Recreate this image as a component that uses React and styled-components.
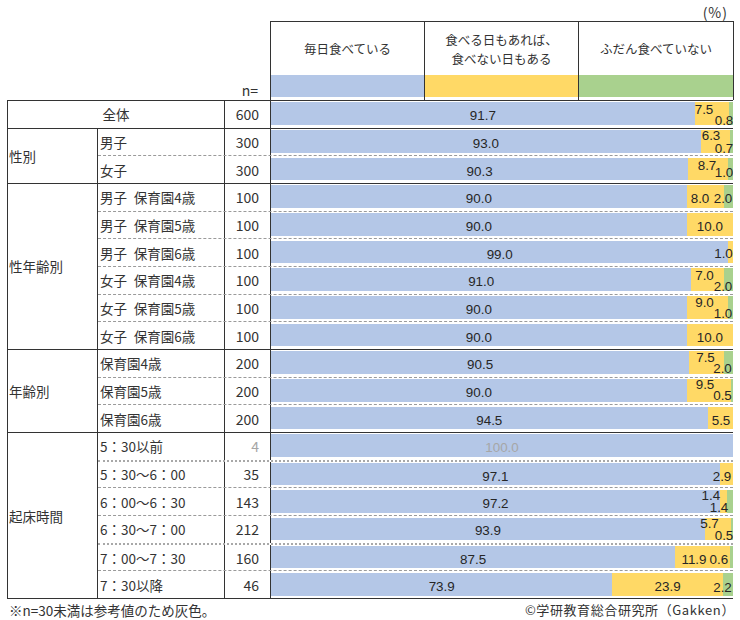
import React from 'react';
import styled, { createGlobalStyle } from 'styled-components';

const GlobalStyle = createGlobalStyle`
  html, body { margin: 0; padding: 0; background: #ffffff; }
  body {
    font-family: "Noto Sans CJK JP", "Noto Sans", sans-serif;
    color: #333333;
  }
`;

const COLORS = ['#B4C7E7', '#FFD966', '#A9D18E'];
const BAR_W = 462;
const ROW_H = 27.68;
const INK = '#333333';
const MUTED = '#a6a6a6';

const Page = styled.div`
  width: 740px;
  height: 620px;
  overflow: hidden;
  display: flex;
  flex-direction: column;
`;

const UnitRow = styled.div`
  height: 21px;
  box-sizing: border-box;
  display: flex;
  justify-content: flex-end;
  align-items: flex-start;
  padding: 3px 12px 0 0;
  font-size: 14px;
  line-height: 18px;
  letter-spacing: 1px;
`;

const HeaderRow = styled.div`
  display: flex;
  height: 79px;
`;

const HeadStub = styled.div`
  width: 270px;
  flex: none;
  box-sizing: border-box;
  display: flex;
  justify-content: flex-end;
  align-items: flex-end;
  padding-right: 12px;
  font-size: 14px;
  line-height: 20px;
`;

const ChartHead = styled.div`
  width: 464px;
  flex: none;
  box-sizing: border-box;
  border: 1px solid ${INK};
  border-bottom: none;
  display: grid;
  grid-template-columns: 153px 154px 155px;
`;

const HeadCell = styled.div`
  display: flex;
  flex-direction: column;
  box-sizing: border-box;
  & + & { border-left: 1px solid ${INK}; }
`;

const HeadText = styled.div`
  height: 53px;
  display: flex;
  align-items: center;
  justify-content: center;
  text-align: center;
  font-size: 12.5px;
  line-height: 19px;
  white-space: pre-line;
`;

const Strip = styled.div`
  height: 22px;
  background: ${(p) => p.$color};
`;

const Table = styled.div`
  margin-left: 7px;
  width: 726px;
  box-sizing: border-box;
  border-left: 1px solid ${INK};
  border-bottom: 1px solid ${INK};
`;

const Group = styled.div`
  display: flex;
`;

const GroupLabel = styled.div`
  width: 90px;
  flex: none;
  box-sizing: border-box;
  border-top: 1px solid ${INK};
  border-right: 1px solid ${INK};
  display: flex;
  align-items: center;
  padding-left: 1px;
  font-size: 13.5px;
`;

const SubRows = styled.div`
  display: flex;
  flex-direction: column;
  width: 635px;
`;

const borderFor = (k) =>
  k === 'solid'
    ? `1px solid ${INK}`
    : k === 'dense'
    ? '2px dotted #a8a8a8'
    : '1px dashed #9a9a9a';

const SubRow = styled.div`
  display: grid;
  grid-template-columns: ${(p) => (p.$total ? '217px 46px 462px' : '127px 46px 462px')};
  height: ${ROW_H}px;
  box-sizing: border-box;
  border-top: ${(p) => borderFor(p.$line)};
`;

const NameCell = styled.div`
  box-sizing: border-box;
  border-right: 1px solid ${INK};
  display: flex;
  align-items: center;
  justify-content: ${(p) => (p.$center ? 'center' : 'flex-start')};
  padding-left: ${(p) => (p.$center ? '0' : '2px')};
  font-size: 13.5px;
  white-space: nowrap;
`;

const NCell = styled.div`
  box-sizing: border-box;
  border-right: 1px solid ${INK};
  display: flex;
  align-items: center;
  justify-content: flex-end;
  padding-right: 11px;
  font-size: 14px;
  color: ${(p) => (p.$muted ? MUTED : INK)};
`;

const BarCell = styled.div`
  box-sizing: border-box;
  padding: 1.5px 0 2.5px;
`;

const Bar = styled.div`
  position: relative;
  height: 100%;
  display: flex;
  overflow: hidden;
`;

const Segment = styled.div`
  flex: none;
  height: 100%;
  background: ${(p) => p.$color};
`;

const BarLabel = styled.span`
  position: absolute;
  font-family: "Liberation Sans", Arial, sans-serif;
  font-size: 13.4px;
  line-height: 13px;
  white-space: nowrap;
  transform: translate(-50%, -50%);
  color: ${(p) => (p.$muted ? MUTED : '#262626')};
`;

const Footer = styled.div`
  display: flex;
  justify-content: space-between;
  align-items: center;
  height: 20px;
  padding: 1px 5px 0 9px;
  line-height: 18px;
`;

const Note = styled.span`
  font-size: 13.5px;
`;

const Copyright = styled.span`
  font-size: 13px;
  letter-spacing: 0.6px;
`;

const total = { name: '全体', n: 600, v: [91.7, 7.5, 0.8], lab: [null, [433, -3.7], [453, 7.5]] };

const groups = [
  {
    title: '性別',
    rows: [
      { name: '男子', n: 300, v: [93.0, 6.3, 0.7], lab: [null, [440, -5.3], [453, 7.5]] },
      { name: '女子', n: 300, v: [90.3, 8.7, 1.0], lab: [null, [436, -3.3], [453, 4]] },
    ],
  },
  {
    title: '性年齢別',
    rows: [
      { name: '男子\u2002保育園4歳', n: 100, v: [90.0, 8.0, 2.0], lab: [null, [429, 2.5], [452, 2.5]] },
      { name: '男子\u2002保育園5歳', n: 100, v: [90.0, 10.0, 0], lab: [null, null, null] },
      { name: '男子\u2002保育園6歳', n: 100, v: [99.0, 1.0, 0], lab: [null, [452.5, 2], null] },
      { name: '女子\u2002保育園4歳', n: 100, v: [91.0, 7.0, 2.0], lab: [null, [433.5, -4.3], [452, 7.4]] },
      { name: '女子\u2002保育園5歳', n: 100, v: [90.0, 9.0, 1.0], lab: [null, [433.5, -5], [452, 6]] },
      { name: '女子\u2002保育園6歳', n: 100, v: [90.0, 10.0, 0], lab: [null, null, null] },
    ],
  },
  {
    title: '年齢別',
    rows: [
      { name: '保育園4歳', n: 200, v: [90.5, 7.5, 2.0], lab: [null, [434.5, -4.8], [451.5, 6.4]] },
      { name: '保育園5歳', n: 200, v: [90.0, 9.5, 0.5], lab: [null, [434, -5.3], [451.5, 5.4]] },
      { name: '保育園6歳', n: 200, v: [94.5, 5.5, 0], lab: [null, [450, 2.7], null] },
    ],
  },
  {
    title: '起床時間',
    rows: [
      { name: '5：30以前', n: 4, muted: true, v: [100.0, 0, 0], lab: [null, null, null] },
      { name: '5：30～6：00', n: 35, dense: true, v: [97.1, 2.9, 0], lab: [null, [451, 2], null] },
      { name: '6：00～6：30', n: 143, v: [97.2, 1.4, 1.4], lab: [null, [439.8, -5.2], [448, 6.5]] },
      { name: '6：30～7：00', n: 212, v: [93.9, 5.7, 0.5], lab: [null, [438.5, -5.4], [453, 6.6]] },
      { name: '7：00～7：30', n: 160, dense: true, v: [87.5, 11.9, 0.6], lab: [null, [423, 2.7], [447.8, 2.7]] },
      { name: '7：30以降', n: 46, v: [73.9, 23.9, 2.2], lab: [null, null, [451.5, 3.3]] },
    ],
  },
];

function StackedBar({ v, lab, muted }) {
  let start = 0;
  const labels = [];
  v.forEach((val, i) => {
    const w = (val / 100) * BAR_W;
    if (val > 0) {
      const pos = lab[i];
      const x = pos ? pos[0] : start + w / 2;
      const dy = pos ? pos[1] : 2.3;
      labels.push(
        <BarLabel key={i} $muted={muted} style={{ left: `${x}px`, top: `${10.5 + dy}px` }}>
          {val.toFixed(1)}
        </BarLabel>
      );
    }
    start += w;
  });
  return (
    <Bar>
      {v.map((val, i) =>
        val > 0 ? (
          <Segment key={i} $color={COLORS[i]} style={{ width: `${(val / 100) * BAR_W}px` }} />
        ) : null
      )}
      {labels}
    </Bar>
  );
}

function DataRow({ row, line, totalRow }) {
  return (
    <SubRow $line={line} $total={totalRow}>
      <NameCell $center={totalRow}>{row.name}</NameCell>
      <NCell $muted={row.muted}>{row.n}</NCell>
      <BarCell>
        <StackedBar v={row.v} lab={row.lab} muted={row.muted} />
      </BarCell>
    </SubRow>
  );
}

const heads = [
  { text: '毎日食べている', color: COLORS[0] },
  { text: '食べる日もあれば、\n食べない日もある', color: COLORS[1] },
  { text: 'ふだん食べていない', color: COLORS[2] },
];

export default function App() {
  return (
    <Page>
      <GlobalStyle />
      <UnitRow>(%)</UnitRow>
      <HeaderRow>
        <HeadStub>n=</HeadStub>
        <ChartHead>
          {heads.map((h) => (
            <HeadCell key={h.text}>
              <HeadText>{h.text}</HeadText>
              <Strip $color={h.color} />
            </HeadCell>
          ))}
        </ChartHead>
      </HeaderRow>
      <Table>
        <DataRow row={total} line="solid" totalRow />
        {groups.map((g) => (
          <Group key={g.title}>
            <GroupLabel>{g.title}</GroupLabel>
            <SubRows>
              {g.rows.map((r, i) => (
                <DataRow
                  key={r.name}
                  row={r}
                  line={i === 0 ? 'solid' : r.dense ? 'dense' : 'dashed'}
                />
              ))}
            </SubRows>
          </Group>
        ))}
      </Table>
      <Footer>
        <Note>※n=30未満は参考値のため灰色。</Note>
        <Copyright>©学研教育総合研究所（Gakken）</Copyright>
      </Footer>
    </Page>
  );
}
